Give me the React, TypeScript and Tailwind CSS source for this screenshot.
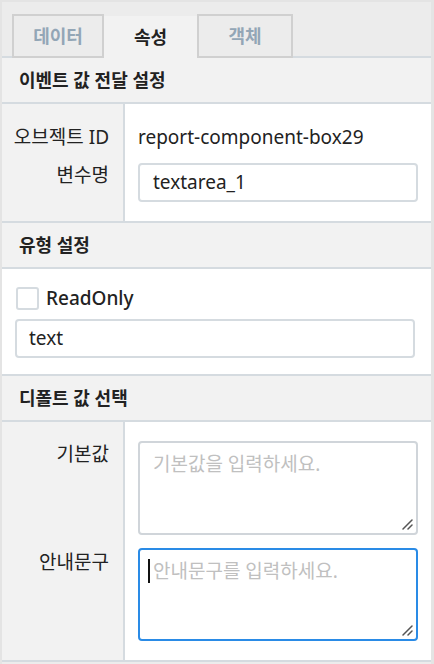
import { FC } from "react";

const Header: FC<{ title: string }> = ({ title }) => (
  <div className="h-[46px] flex items-center pl-[17px] bg-[#f2f2f2] border-b-2 border-[#d5dbe0] text-[18px] font-bold text-[#222]">
    {title}
  </div>
);

const Label: FC<{ text: string }> = ({ text }) => (
  <div className="text-right pr-[14px] text-[19px] h-[24px] leading-[24px] text-[#222] whitespace-nowrap">
    {text}
  </div>
);

const Grip: FC = () => (
  <svg className="absolute right-[3px] bottom-[3px]" width="12" height="12" viewBox="0 0 12 12">
    <path d="M11 2L2 11M11 7L7 11" stroke="#555" strokeWidth="1.5" strokeLinecap="round" />
  </svg>
);

export default function App() {
  return (
    <div className="w-[434px] h-[664px] bg-[#ececec] border-l-2 border-r-[3px] border-t-2 border-[#e4e4e4] pt-[12px] font-['Noto_Sans','Noto_Sans_CJK_KR',sans-serif] overflow-hidden">
      <div className="flex pl-[10px] h-[44px] border-b-2 border-[#d5dbe0]">
        <div className="w-[92px] h-[44px] flex items-center justify-center border-2 border-[#d0d0d0] text-[18px] font-bold text-[#93a6b6]">
          데이터
        </div>
        <div className="w-[93px] h-[44px] -mb-[2px] relative flex items-center justify-center bg-[#f2f2f2] border-t-2 border-[#ececec] text-[18px] font-bold text-[#222]">
          속성
        </div>
        <div className="w-[96px] h-[44px] flex items-center justify-center border-2 border-[#d0d0d0] text-[18px] font-bold text-[#93a6b6]">
          객체
        </div>
      </div>

      <Header title="이벤트 값 전달 설정" />
      <div className="grid grid-cols-[123px_1fr] border-b-2 border-[#d5dbe0]">
        <div className="bg-[#f2f2f2] border-r-2 border-[#d5dbe0] pt-[21px]">
          <Label text="오브젝트 ID" />
        </div>
        <div className="bg-white pt-[21px] px-[13px]">
          <div className="h-[24px] leading-[24px] text-[19px] text-[#222]">report-component-box29</div>
        </div>
        <div className="bg-[#f2f2f2] border-r-2 border-[#d5dbe0] pt-[14px]">
          <Label text="변수명" />
        </div>
        <div className="bg-white pt-[14px] px-[13px] pb-[19px]">
          <div className="h-[39px] rounded-[4px] border-2 border-[#d5dbe0] flex items-center pl-[13px] text-[19px] text-[#222]">
            textarea_1
          </div>
        </div>
      </div>

      <Header title="유형 설정" />
      <div className="bg-white border-b-2 border-[#d5dbe0] pt-[18px] pb-[16px] pl-[13px] pr-[16px]">
        <div className="flex items-center gap-[7px] h-[23px] pl-[1px]">
          <div className="w-[23px] h-[23px] rounded-[3px] border-2 border-[#d5dbe0] bg-white" />
          <span className="text-[19px] font-medium text-[#222]">ReadOnly</span>
        </div>
        <div className="mt-[9px] h-[39px] rounded-[4px] border-2 border-[#d5dbe0] flex items-center pl-[12px] text-[19px] text-[#222]">
          text
        </div>
      </div>

      <Header title="디폴트 값 선택" />
      <div className="grid grid-cols-[123px_1fr] border-b-2 border-[#d5dbe0] h-[240px] grid-rows-[113px_1fr]">
        <div className="bg-[#f2f2f2] border-r-2 border-[#d5dbe0] pt-[20px]">
          <Label text="기본값" />
        </div>
        <div className="bg-white pt-[19px] px-[13px]">
          <div className="relative h-[94px] rounded-[4px] border-2 border-[#d0d5da] pl-[13px] pt-[8px] text-[19px] leading-[26px] text-[#c0c0c0]">
            기본값을 입력하세요.
            <Grip />
          </div>
        </div>
        <div className="bg-[#f2f2f2] border-r-2 border-[#d5dbe0] pt-[15px]">
          <Label text="안내문구" />
        </div>
        <div className="bg-white pt-[13px] px-[13px]">
          <div className="relative h-[93px] rounded-[4px] border-2 border-[#2a8be6] pl-[8px] pt-[8px] text-[19px] leading-[26px] text-[#c0c0c0] flex items-start">
            <span className="inline-block w-[2px] h-[24px] bg-[#111] mr-[3px] mt-[1px]" />
            안내문구를 입력하세요.
            <Grip />
          </div>
        </div>
      </div>
    </div>
  );
}
